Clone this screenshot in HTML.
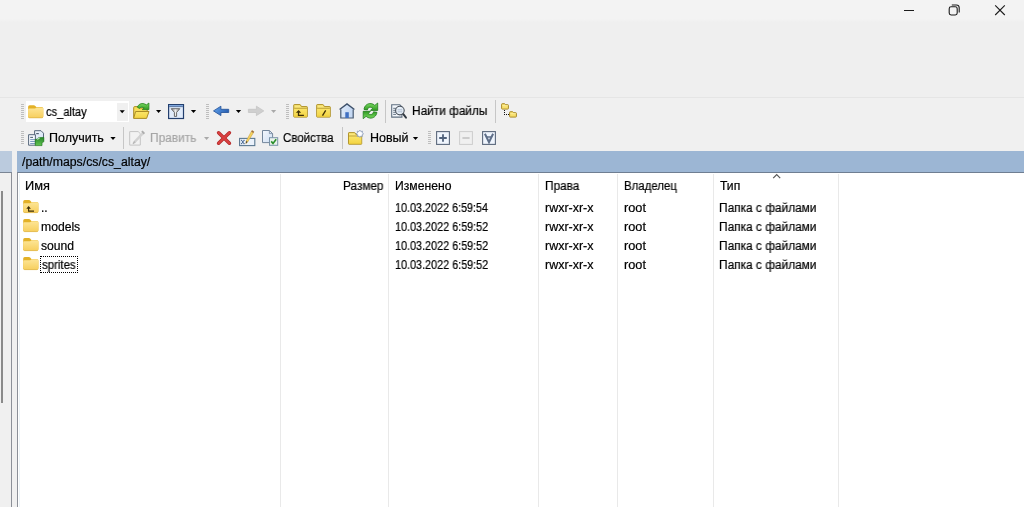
<!DOCTYPE html>
<html><head><meta charset="utf-8">
<style>
*{margin:0;padding:0;box-sizing:border-box}
html,body{width:1024px;height:507px;overflow:hidden;background:#f0f0f0}
body{position:relative;font-family:"Liberation Sans",sans-serif;font-size:12px;color:#000}
.a{position:absolute}
.t{position:absolute;white-space:nowrap;line-height:14px;height:14px;transform-origin:0 50%;will-change:transform;-webkit-text-stroke:.2px currentColor}
.g{color:#a6a6a6}
.col{position:absolute;top:174px;width:1px;height:333px;background:#e9e9e9}
svg{position:absolute;left:0;top:0;overflow:visible}
</style></head><body>
<div class="a" style="left:0;top:0;width:1024px;height:22px;background:linear-gradient(#f3f3f3 0,#f3f3f3 19px,#efefef 22px)"></div>
<div class="a" style="left:0;top:22px;width:1024px;height:75px;background:#efefef"></div>
<div class="a" style="left:0;top:97px;width:1024px;height:1px;background:#e5e5e5"></div>
<div class="a" style="left:25.5px;top:101.4px;width:103.3px;height:20.7px;background:#fff"></div>
<div class="a" style="left:117px;top:103px;width:11px;height:18px;background:#f0f0f0"></div>
<div class="a" style="left:0;top:151px;width:12px;height:21px;background:#bbcbde"></div>
<div class="a" style="left:0;top:172px;width:12px;height:335px;background:#f0f0f0;border-top:1px solid #7a8594;border-right:1px solid #8c9098"></div>
<div class="a" style="left:1px;top:191px;width:2px;height:212px;background:#8a8a8a"></div>
<div class="a" style="left:17px;top:151px;width:1007px;height:21px;background:#9cb6d4"></div>
<div class="a" style="left:17px;top:172px;width:1007px;height:335px;background:#fff;border-top:1px solid #6f7e92;border-left:1px solid #8c9098"></div>
<div class="col" style="left:280px"></div>
<div class="col" style="left:388px"></div>
<div class="col" style="left:538px"></div>
<div class="col" style="left:617px"></div>
<div class="col" style="left:713px"></div>
<div class="col" style="left:838px"></div>
<div class="a" style="left:40px;top:256px;width:38px;height:17px;border:1px dotted #000"></div>
<div class="a" style="left:19px;top:174px;width:1px;height:333px;background:#eef5f9"></div>
<div class="t " id="t_cs" style="left:46.04px;top:104.8px;transform:scaleX(0.9253)">cs_altay</div>
<div class="t " id="t_find" style="left:411.86px;top:104.4px;transform:scaleX(0.9874)">Найти файлы</div>
<div class="t " id="t_get" style="left:49.11px;top:131.1px;transform:scaleX(1.0401)">Получить</div>
<div class="t g" id="t_edit" style="left:150.16px;top:131.1px;transform:scaleX(0.9901)">Править</div>
<div class="t " id="t_prop" style="left:283.47px;top:131.1px;transform:scaleX(0.9586)">Свойства</div>
<div class="t " id="t_new" style="left:370.10px;top:131.1px;transform:scaleX(1.0412)">Новый</div>
<div class="t " id="t_path" style="left:22.30px;top:155.3px;transform:scaleX(1.0228)">/path/maps/cs/cs_altay/</div>
<div class="t " id="h1" style="left:25.08px;top:179.1px;transform:scaleX(1.0629)">Имя</div>
<div class="t " id="h2" style="left:342.71px;top:179.1px;transform:scaleX(0.9813)">Размер</div>
<div class="t " id="h3" style="left:394.69px;top:179.1px;transform:scaleX(1.0138)">Изменено</div>
<div class="t " id="h4" style="left:544.71px;top:179.1px;transform:scaleX(0.9823)">Права</div>
<div class="t " id="h5" style="left:623.90px;top:179.1px;transform:scaleX(0.9510)">Владелец</div>
<div class="t " id="h6" style="left:719.90px;top:179.1px;transform:scaleX(1.0106)">Тип</div>
<div class="t " id="n0" style="left:41.18px;top:200.6px;transform:scaleX(0.9568)">..</div>
<div class="t " id="d0" style="left:394.89px;top:200.6px;transform:scaleX(0.8988)">10.03.2022 6:59:54</div>
<div class="t " id="p0" style="left:544.92px;top:200.6px;transform:scaleX(1.0385)">rwxr-xr-x</div>
<div class="t " id="o0" style="left:624.30px;top:200.6px;transform:scaleX(1.0601)">root</div>
<div class="t " id="y0" style="left:719.01px;top:200.6px;transform:scaleX(0.9897)">Папка с файлами</div>
<div class="t " id="n1" style="left:40.64px;top:219.6px;transform:scaleX(1.0133)">models</div>
<div class="t " id="d1" style="left:394.88px;top:219.6px;transform:scaleX(0.9010)">10.03.2022 6:59:52</div>
<div class="t " id="p1" style="left:544.92px;top:219.6px;transform:scaleX(1.0385)">rwxr-xr-x</div>
<div class="t " id="o1" style="left:624.30px;top:219.6px;transform:scaleX(1.0601)">root</div>
<div class="t " id="y1" style="left:719.01px;top:219.6px;transform:scaleX(0.9897)">Папка с файлами</div>
<div class="t " id="n2" style="left:41.40px;top:238.6px;transform:scaleX(1.0127)">sound</div>
<div class="t " id="d2" style="left:394.88px;top:238.6px;transform:scaleX(0.9010)">10.03.2022 6:59:52</div>
<div class="t " id="p2" style="left:544.92px;top:238.6px;transform:scaleX(1.0385)">rwxr-xr-x</div>
<div class="t " id="o2" style="left:624.30px;top:238.6px;transform:scaleX(1.0601)">root</div>
<div class="t " id="y2" style="left:719.01px;top:238.6px;transform:scaleX(0.9897)">Папка с файлами</div>
<div class="t " id="n3" style="left:41.66px;top:257.6px;transform:scaleX(0.9526)">sprites</div>
<div class="t " id="d3" style="left:394.88px;top:257.6px;transform:scaleX(0.9010)">10.03.2022 6:59:52</div>
<div class="t " id="p3" style="left:544.92px;top:257.6px;transform:scaleX(1.0385)">rwxr-xr-x</div>
<div class="t " id="o3" style="left:624.30px;top:257.6px;transform:scaleX(1.0601)">root</div>
<div class="t " id="y3" style="left:719.01px;top:257.6px;transform:scaleX(0.9897)">Папка с файлами</div>
<svg width="1024" height="507" viewBox="0 0 1024 507">
<defs>
 <linearGradient id="fb" x1="0" y1="0" x2="0" y2="1"><stop offset="0" stop-color="#fde596"/><stop offset="1" stop-color="#f7cf5e"/></linearGradient>
 <linearGradient id="yf" x1="0" y1="0" x2="0" y2="1"><stop offset="0" stop-color="#fbe569"/><stop offset="1" stop-color="#f3d443"/></linearGradient>
 <linearGradient id="gr" x1="0" y1="0" x2="0" y2="1"><stop offset="0" stop-color="#7ddc63"/><stop offset="1" stop-color="#2f9a22"/></linearGradient>
 <linearGradient id="bl" x1="0" y1="0" x2="1" y2=".35"><stop offset="0" stop-color="#62a4ee"/><stop offset="1" stop-color="#2b62b4"/></linearGradient>
 <linearGradient id="doc" x1="0" y1="0" x2="1" y2="1"><stop offset="0" stop-color="#f4f8fd"/><stop offset="1" stop-color="#cfdff3"/></linearGradient>
 <linearGradient id="fn" x1="0" y1="0" x2="1" y2="0"><stop offset="0" stop-color="#858585"/><stop offset=".5" stop-color="#ececec"/><stop offset="1" stop-color="#8a8a8a"/></linearGradient>
 <linearGradient id="gr2" x1="0" y1="0" x2="0" y2="1"><stop offset="0" stop-color="#27872a"/><stop offset="1" stop-color="#62c552"/></linearGradient>
 <linearGradient id="hw" x1="0" y1="0" x2="1" y2="0"><stop offset="0" stop-color="#dce9f9"/><stop offset="1" stop-color="#c2d6f2"/></linearGradient>
 <g id="dd"><path d="M0 0h5.2L2.6 3.1z"/></g>
 <!-- win11 folder 15.4 x 12.8 -->
 <g id="wf">
  <path d="M0 1.5Q0 0 1.5 0H5.7Q6.6 0 7.2 .7L8.2 1.9H13.7Q15.2 1.9 15.2 3.4V11.1Q15.2 12.6 13.7 12.6H1.5Q0 12.6 0 11.1Z" fill="#e3b127"/>
  <path d="M0 4.4Q0 3.2 1.2 3.2H6.9Q7.4 3.2 7.8 2.8L8.3 2.3H13.8Q15.2 2.3 15.2 3.7V11.2Q15.2 12.6 13.8 12.6H1.4Q0 12.6 0 11.2Z" fill="url(#fb)"/>
  <path d="M0.3 11.9Q.8 12.6 1.6 12.6H13.6Q14.4 12.6 14.9 11.9" stroke="#dfb444" stroke-width=".7" fill="none"/>
 </g>
 <!-- classic yellow folder 15 x 14 -->
 <g id="cf">
  <path d="M.5 1Q.5 .5 1 .5H6.7Q7.1 .5 7.3 .9L8.1 2.5H13.6Q14.05 2.5 14.05 3V12.5Q14.05 13 13.6 13H1Q.5 13 .5 12.5Z" fill="#fbe87c" stroke="#ad8f24" stroke-width="1"/>
  <rect x="1" y="4.6" width="12.55" height="7.9" fill="url(#yf)"/>
  <path d="M1 4.15H13.55" stroke="#b5972a" stroke-width=".9"/>
  <path d="M1 12.2H13.55" stroke="#e6c636" stroke-width=".7"/>
 </g>
</defs>

<!-- window controls -->
<g fill="none" stroke="#1b1b1b" stroke-width="1">
 <path d="M904 10.5H914"/>
 <rect x="949.2" y="6.8" width="8" height="8.2" rx="1.9" stroke-width="1.1"/>
 <path d="M951.8 5H956.4A2.8 2.8 0 0 1 959.2 7.8V12.6" stroke-width="1.1"/>
 <path d="M995.2 5.4L1004.8 15M1004.8 5.4L995.2 15" stroke-width="1.1"/>
</g>

<!-- grips -->
<g fill="#bebebe">
 <g id="g8"><rect x="21" y="104" width="3" height="1"/><rect x="21" y="106" width="3" height="1"/><rect x="21" y="108" width="3" height="1"/><rect x="21" y="110" width="3" height="1"/><rect x="21" y="112" width="3" height="1"/><rect x="21" y="114" width="3" height="1"/><rect x="21" y="116" width="3" height="1"/><rect x="21" y="118" width="3" height="1"/></g>
 <use href="#g8" x="185" y="0"/>
 <use href="#g8" x="265" y="0"/>
 <g id="g7"><rect x="21" y="131" width="3" height="1"/><rect x="21" y="133" width="3" height="1"/><rect x="21" y="135" width="3" height="1"/><rect x="21" y="137" width="3" height="1"/><rect x="21" y="139" width="3" height="1"/><rect x="21" y="141" width="3" height="1"/><rect x="21" y="143" width="3" height="1"/></g>
 <use href="#g7" x="407" y="0"/>
</g>

<!-- separators -->
<g fill="#c6c6c6">
 <rect x="385" y="100" width="1" height="23"/>
 <rect x="495" y="100" width="1" height="23"/>
 <rect x="123" y="127" width="1" height="22"/>
 <rect x="342" y="127" width="1" height="22"/>
</g>

<!-- dropdown arrows -->
<g fill="#000">
 <use href="#dd" x="119.6" y="110.2"/>
 <use href="#dd" x="156" y="110"/>
 <use href="#dd" x="190.9" y="110"/>
 <use href="#dd" x="235.9" y="110"/>
 <use href="#dd" x="110.4" y="137"/>
 <use href="#dd" x="412.9" y="137"/>
</g>
<g fill="#a9a9a9">
 <use href="#dd" x="271" y="110"/>
 <use href="#dd" x="204" y="137"/>
</g>

<!-- combo folder -->
<use href="#wf" x="28.1" y="105.2"/>

<!-- open folder w/ green arrow -->
<g>
 <path d="M133.7 118V107.6Q133.7 106.6 134.7 106.6H138.2L139.4 108H146.2Q147.2 108 147.2 109V111.5" fill="#f7dc57" stroke="#a98b26" stroke-width="1"/>
 <path d="M133.6 118.4L135.6 111.5H149L146.6 118.4Z" fill="url(#yf)" stroke="#a98b26" stroke-width="1" stroke-linejoin="round"/>
 <path d="M137.3 107.2C138.4 104.4 141.2 102.9 144 103.8L146.6 104.8L148.9 103V109.6H142.3L144.2 108C142.6 106.9 140.6 107 139.4 108.4Z" fill="url(#gr)" stroke="#23801a" stroke-width=".8" stroke-linejoin="round"/>
</g>

<!-- filter window -->
<g>
 <rect x="168.6" y="104.6" width="14.9" height="13.9" fill="#e1ecfb" stroke="#233f6e" stroke-width="1.2"/>
 <rect x="169.2" y="105.2" width="13.7" height="1.2" fill="#6f9fdd"/><rect x="169.2" y="106.4" width="13.7" height=".7" fill="#2f4f80"/>
 <path d="M171.2 108.7H179.8L176.6 112.4V116.4H174.4V112.4Z" fill="url(#fn)" stroke="#5c5c5c" stroke-width=".9" stroke-linejoin="round"/>
</g>

<!-- back / forward arrows -->
<path d="M213.5 110.9L220.9 106.2V109.3H228.7V112.5H220.9V115.6Z" fill="url(#bl)" stroke="#2a589e" stroke-width=".9" stroke-linejoin="round"/>
<path d="M263.8 110.9L256.4 106.2V109.3H248.4V112.5H256.4V115.6Z" fill="#cfcfcf" stroke="#c4c4c4" stroke-width=".8" stroke-linejoin="round"/>

<!-- folder up -->
<use href="#cf" x="293.25" y="104.1"/>
<path d="M298.5 111V115.3H303.9" stroke="#3f3006" stroke-width="1.3" fill="none"/>
<path d="M295.9 112.7L298.6 109.9L301.1 112.7Z" fill="#3f3006"/>
<!-- folder root -->
<use href="#cf" x="316.2" y="104.1"/>
<path d="M325.7 110.3L322.5 115.6" stroke="#3f3006" stroke-width="1.3" fill="none"/>

<!-- home -->
<g>
 <path d="M340.8 118V109L347 104.2L353.2 109V118Z" fill="url(#hw)"/>
 <path d="M340.8 109.4V118H353.2V109.4" fill="none" stroke="#485a72" stroke-width="1.2"/>
 <rect x="345.3" y="112.2" width="3.5" height="5.8" fill="#3f70c2"/>
 <path d="M339.6 109.5L347 103.9L354.4 109.5" fill="none" stroke="#3e516b" stroke-width="1.5" stroke-linejoin="miter"/>
</g>

<!-- refresh -->
<g fill="url(#gr)" stroke="#1f7a1c" stroke-width=".8" stroke-linejoin="round">
 <path id="rf" d="M364 109.4C364.4 105.6 367.6 103.2 371 103.6C372.6 103.8 373.8 104.4 374.8 105.4L377.7 103V110.4H370.5L372.6 108.2C371.9 107.5 371 107.2 370.2 107.2C368.6 107.2 367.7 108.2 367.4 109.9Z"/>
 <use href="#rf" transform="rotate(180 370.45 110.85)"/>
</g>

<!-- find -->
<g>
 <path d="M391.7 104.8H399.8L401.9 106.9V117.1H391.7Z" fill="#f3f7fc" stroke="#5f6f80" stroke-width="1.1"/>
 <path d="M393.2 108.3H396M393.2 110.3H396M393.2 112.3H396M393.2 114.4H396" stroke="#566577" stroke-width=".9"/>
 <circle cx="399.9" cy="110.6" r="4.3" fill="#e6eff9" fill-opacity=".92" stroke="#474f59" stroke-width="1.1"/>
 <path d="M397.6 109.8H402.2M397.6 111.8H402.2" stroke="#a3b3c8" stroke-width=".8"/>
 <path d="M403.3 114.2L406 117.7" stroke="#2f3740" stroke-width="1.9" stroke-linecap="round"/>
</g>

<!-- tree -->
<g>
 <path id="tf" d="M501.6 104.3Q501.6 103.7 502.2 103.7H504.7L505.6 104.7H507.8Q508.4 104.7 508.4 105.3V108.5Q508.4 109.1 507.8 109.1H502.2Q501.6 109.1 501.6 108.5Z" fill="#f8e06c" stroke="#a98b2a" stroke-width="1"/>
 <path d="M502.2 105.7H507.8" stroke="#fdf1a6" stroke-width=".8"/>
 <use href="#tf" x="8" y="8"/>
 <path d="M510.2 113.7H515.8" stroke="#fdf1a6" stroke-width=".8"/>
 <g fill="#111"><rect x="504" y="110" width="1" height="1"/><rect x="504" y="112" width="1" height="1"/><rect x="504" y="114" width="1" height="1"/><rect x="506" y="114" width="1" height="1"/><rect x="508" y="114" width="1" height="1"/></g>
</g>

<!-- row2: download -->
<g>
 <path d="M34.6 130.7H41L43.5 133.2V140.5H34.6Z" fill="url(#doc)" stroke="#55667a" stroke-width="1"/>
 <path d="M36.2 133.6H38.8" stroke="#4f5f72" stroke-width="1.2"/>
 <path d="M28.6 134.7H35.4V145.2H28.6Z" fill="#f4f8fd" stroke="#55667a" stroke-width="1"/>
 <path d="M30.2 137.4H33" stroke="#55667a" stroke-width="1.1"/>
 <path d="M30.2 139.6H35M30.2 141.5H35M30.2 143.5H35" stroke="#6f90b8" stroke-width=".9"/>
 <path d="M35.3 139.3H37.4L38.6 137.7L43.8 137.4V141.8L42 142.5V145.6H35.3Z" fill="url(#gr2)" stroke="#217a1c" stroke-width=".7" stroke-linejoin="round"/>
 <path d="M37.8 139.2L39.4 138.2" stroke="#e4f8dc" stroke-width="1" stroke-linecap="round"/>
</g>

<!-- edit disabled -->
<g>
 <path d="M129.7 131.6H138.2L140.3 133.7V145.1H129.7Z" fill="#f2f2f2" stroke="#c4c4c4" stroke-width="1"/>
 <path d="M143 133.2L134.2 142.4" stroke="#d2d2d2" stroke-width="2.4"/>
 <path d="M134.9 141.6L133 143.7" stroke="#b8b8b8" stroke-width="1.6"/>
 <path d="M141.2 131.8L142.6 130.6L145 133L143.8 134.4Z" fill="#adadad"/>
</g>

<!-- delete X -->
<path d="M218.6 132.8L229.4 143.2M229.4 132.8L218.6 143.2" stroke="#b02828" stroke-width="3.5" stroke-linecap="round" fill="none"/>
<path d="M218.6 132.8L229.4 143.2M229.4 132.8L218.6 143.2" stroke="#da4040" stroke-width="2.1" stroke-linecap="round" fill="none"/>

<!-- rename -->
<g>
 <rect x="239.6" y="138.4" width="15.2" height="7.2" fill="#ebf2fb" stroke="#5b7891" stroke-width="1.1"/>
 <path d="M241.5 140.3L244.1 143.7M244.1 140.3L241.5 143.7M241 140.3H242.2M243.4 140.3H244.6M241 143.7H242.2M243.4 143.7H244.6" stroke="#3e5f8a" stroke-width=".9"/>
 <path d="M252 130.4L254 131.8L247.6 142L245.8 143.6L246.2 141Z" fill="#f7d45c" stroke="#c79e3c" stroke-width=".6"/>
 <path d="M252 130.4L254 131.8L253.2 133L251.2 131.6Z" fill="#9a6a4a"/>
 <path d="M246.2 141L245.8 143.6L247.6 142Z" fill="#3a3a3a"/>
</g>

<!-- properties -->
<g>
 <path d="M262.5 130.5H269.4L272.6 133.6V142.6H262.5Z" fill="url(#doc)" stroke="#74879c" stroke-width="1"/>
 <path d="M269.4 130.5V133.6H272.6" fill="none" stroke="#74879c" stroke-width=".8"/>
 <rect x="269.5" y="137.7" width="8.2" height="7.6" fill="#eaf3ec" stroke="#7a93a8" stroke-width="1"/>
 <path d="M271.2 141.4L273 143.4L276.2 139.2" fill="none" stroke="#2b8f2b" stroke-width="1.6"/>
</g>

<!-- new folder -->
<g>
 <use href="#cf" transform="translate(348 132.15) scale(.976 .93)"/>
 <path d="M359.90 130.10L360.86 131.49L362.52 131.18L362.21 132.84L363.60 133.80L362.21 134.76L362.52 136.42L360.86 136.11L359.90 137.50L358.94 136.11L357.28 136.42L357.59 134.76L356.20 133.80L357.59 132.84L357.28 131.18L358.94 131.49Z" fill="#f2f6fc" stroke="#8b9cb8" stroke-width=".8" stroke-linejoin="round"/>
 <circle cx="359.9" cy="133.8" r="1.7" fill="#fff"/>
</g>

<!-- plus / minus / filter V -->
<g>
 <rect x="436.6" y="131.6" width="12.8" height="12.8" fill="#eff5fd" stroke="#5c697c" stroke-width="1.1"/>
 <path d="M439.2 138H446.8M443 134.2V141.8" stroke="#50627c" stroke-width="1.8" fill="none"/>
 <rect x="459.6" y="131.6" width="12.8" height="12.8" fill="#f0f0f0" stroke="#cdcdcd" stroke-width="1"/>
 <path d="M462.4 138H469.6" stroke="#c4c4c4" stroke-width="1.6" fill="none"/>
 <rect x="482.6" y="131.6" width="12.8" height="12.8" fill="#eff5fd" stroke="#5c697c" stroke-width="1.1"/>
 <path d="M484.9 133.7L489 142.2L493.1 133.7" stroke="#5f6f88" stroke-width="2" fill="none" stroke-linejoin="miter"/><path d="M486.4 137H491.6" stroke="#5f6f88" stroke-width="1.5"/>
</g>

<!-- list folders -->
<use href="#wf" x="23.2" y="200"/>
<path d="M28.6 207V211.1H34" stroke="#3a2c08" stroke-width="1.1" fill="none"/>
<path d="M26.3 208.7L28.6 206.1L30.9 208.7Z" fill="#3a2c08"/>
<use href="#wf" x="23.2" y="219"/>
<use href="#wf" x="23.2" y="238"/>
<use href="#wf" x="23.2" y="257"/>

<!-- sort arrow -->
<path d="M773.2 178.1L776.7 174.6L780.2 178.1" stroke="#585858" stroke-width="1.25" fill="none"/>
</svg>

</body></html>
